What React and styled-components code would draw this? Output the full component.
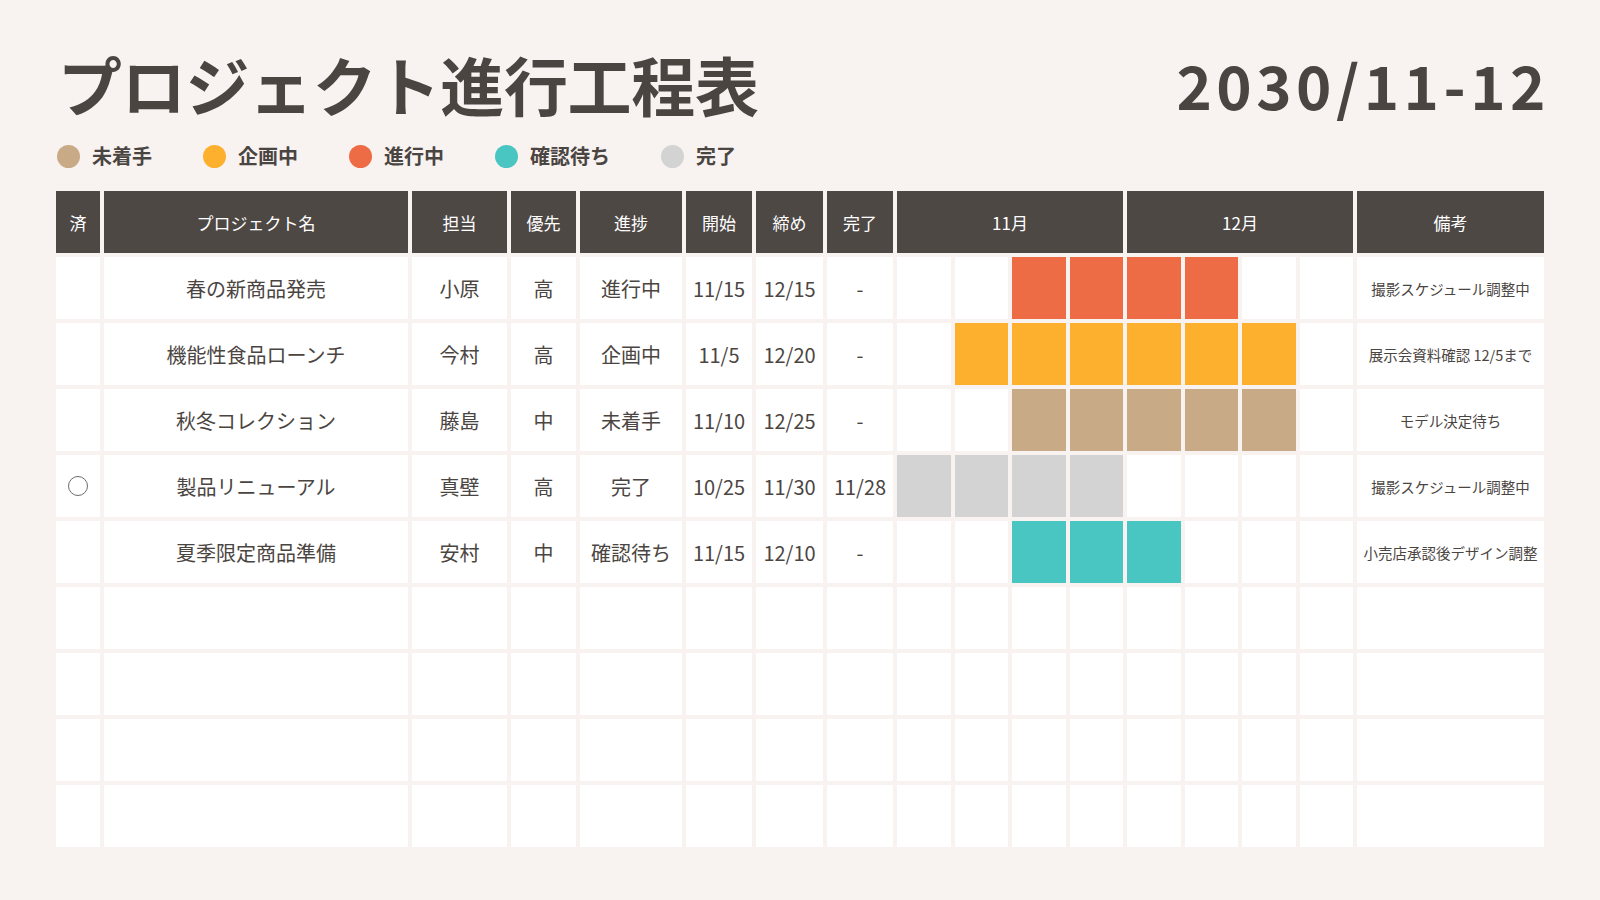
import React from "react";
import styled, { createGlobalStyle } from "styled-components";

const INK = "#4b4542";
const BG = "#f8f3f0";
const HEAD = "#4e4845";
const GRID = "44px 304px 95px 65px 102px 66px 67px 66px repeat(8, 1fr) 187px";

const Global = createGlobalStyle`
  html, body { margin: 0; padding: 0; background: ${BG}; }
  body { font-family: "Noto Sans CJK JP", "Noto Sans", sans-serif; color: ${INK}; }
`;

const Page = styled.div`
  width: 1600px;
  height: 900px;
  box-sizing: border-box;
  padding: 47px 56px 0;
  background: ${BG};
`;

const TopBar = styled.header`
  height: 72px;
  display: flex;
  align-items: center;
  justify-content: space-between;
`;

const Title = styled.h1`
  margin: 0 0 0 2px;
  font-size: 64px;
  line-height: 1;
  font-weight: 700;
  color: ${INK};
  letter-spacing: -0.3px;
`;

const Period = styled.div`
  font-size: 60px;
  line-height: 1;
  font-weight: 700;
  color: ${INK};
  letter-spacing: 4.5px;
  margin-right: -6px;
  margin-top: 2px;
`;

const Legend = styled.ul`
  list-style: none;
  margin: 25px 0 0;
  padding: 0;
  height: 24px;
  display: flex;
  align-items: center;
  gap: 50px;
`;

const LegendItem = styled.li`
  display: flex;
  align-items: center;
  gap: 12px;
  font-size: 20px;
  font-weight: 700;
  line-height: 1;
`;

const Dot = styled.span`
  width: 23px;
  height: 23px;
  border-radius: 50%;
  background: ${(p) => p.$color};
  margin-left: 1px;
`;

const Table = styled.section`
  margin-top: 23px;
  display: flex;
  flex-direction: column;
  gap: 4px;
`;

const Row = styled.div`
  display: grid;
  grid-template-columns: ${GRID};
  gap: 4px;
  height: 62px;
`;

const HeadCell = styled.div`
  grid-column: span ${(p) => p.$span || 1};
  background: ${HEAD};
  color: #fff;
  font-size: 17px;
  display: flex;
  align-items: center;
  justify-content: center;
  white-space: nowrap;
`;

const Cell = styled.div`
  background: ${(p) => p.$fill || "#fff"};
  color: ${INK};
  font-size: ${(p) => (p.$small ? "14.5px" : "20px")};
  display: flex;
  align-items: center;
  justify-content: center;
  white-space: nowrap;
  overflow: hidden;
`;

const Check = styled.span`
  width: 18px;
  height: 18px;
  border: 1px solid #6f6a67;
  border-radius: 50%;
  background: #fff;
`;

const legend = [
  { label: "未着手", color: "#c9aa87" },
  { label: "企画中", color: "#fdb02e" },
  { label: "進行中", color: "#ee6c45" },
  { label: "確認待ち", color: "#4ac6c2" },
  { label: "完了", color: "#d3d3d3" },
];

const rows = [
  { name: "春の新商品発売", owner: "小原", pri: "高", status: "進行中", start: "11/15", end: "12/15", fin: "-", color: "#ee6c45", from: 2, to: 5, note: "撮影スケジュール調整中" },
  { name: "機能性食品ローンチ", owner: "今村", pri: "高", status: "企画中", start: "11/5", end: "12/20", fin: "-", color: "#fdb02e", from: 1, to: 6, note: "展示会資料確認 12/5まで" },
  { name: "秋冬コレクション", owner: "藤島", pri: "中", status: "未着手", start: "11/10", end: "12/25", fin: "-", color: "#c9aa87", from: 2, to: 6, note: "モデル決定待ち" },
  { check: true, name: "製品リニューアル", owner: "真壁", pri: "高", status: "完了", start: "10/25", end: "11/30", fin: "11/28", color: "#d3d3d3", from: 0, to: 3, note: "撮影スケジュール調整中" },
  { name: "夏季限定商品準備", owner: "安村", pri: "中", status: "確認待ち", start: "11/15", end: "12/10", fin: "-", color: "#4ac6c2", from: 2, to: 4, note: "小売店承認後デザイン調整" },
];

const empty = { name: "", owner: "", pri: "", status: "", start: "", end: "", fin: "", color: null, from: -1, to: -2, note: "" };
const allRows = [...rows, empty, empty, empty, empty];
const days = [0, 1, 2, 3, 4, 5, 6, 7];

export default function App() {
  return (
    <Page>
      <Global />
      <TopBar>
        <Title>プロジェクト進行工程表</Title>
        <Period>2030/11-12</Period>
      </TopBar>
      <Legend>
        {legend.map((l) => (
          <LegendItem key={l.label}>
            <Dot $color={l.color} />
            {l.label}
          </LegendItem>
        ))}
      </Legend>
      <Table>
        <Row>
          <HeadCell>済</HeadCell>
          <HeadCell>プロジェクト名</HeadCell>
          <HeadCell>担当</HeadCell>
          <HeadCell>優先</HeadCell>
          <HeadCell>進捗</HeadCell>
          <HeadCell>開始</HeadCell>
          <HeadCell>締め</HeadCell>
          <HeadCell>完了</HeadCell>
          <HeadCell $span={4}>11月</HeadCell>
          <HeadCell $span={4}>12月</HeadCell>
          <HeadCell>備考</HeadCell>
        </Row>
        {allRows.map((r, i) => (
          <Row key={i}>
            <Cell>{r.check && <Check />}</Cell>
            <Cell>{r.name}</Cell>
            <Cell>{r.owner}</Cell>
            <Cell>{r.pri}</Cell>
            <Cell>{r.status}</Cell>
            <Cell>{r.start}</Cell>
            <Cell>{r.end}</Cell>
            <Cell>{r.fin}</Cell>
            {days.map((d) => (
              <Cell key={d} $fill={d >= r.from && d <= r.to ? r.color : null} />
            ))}
            <Cell $small>{r.note}</Cell>
          </Row>
        ))}
      </Table>
    </Page>
  );
}
